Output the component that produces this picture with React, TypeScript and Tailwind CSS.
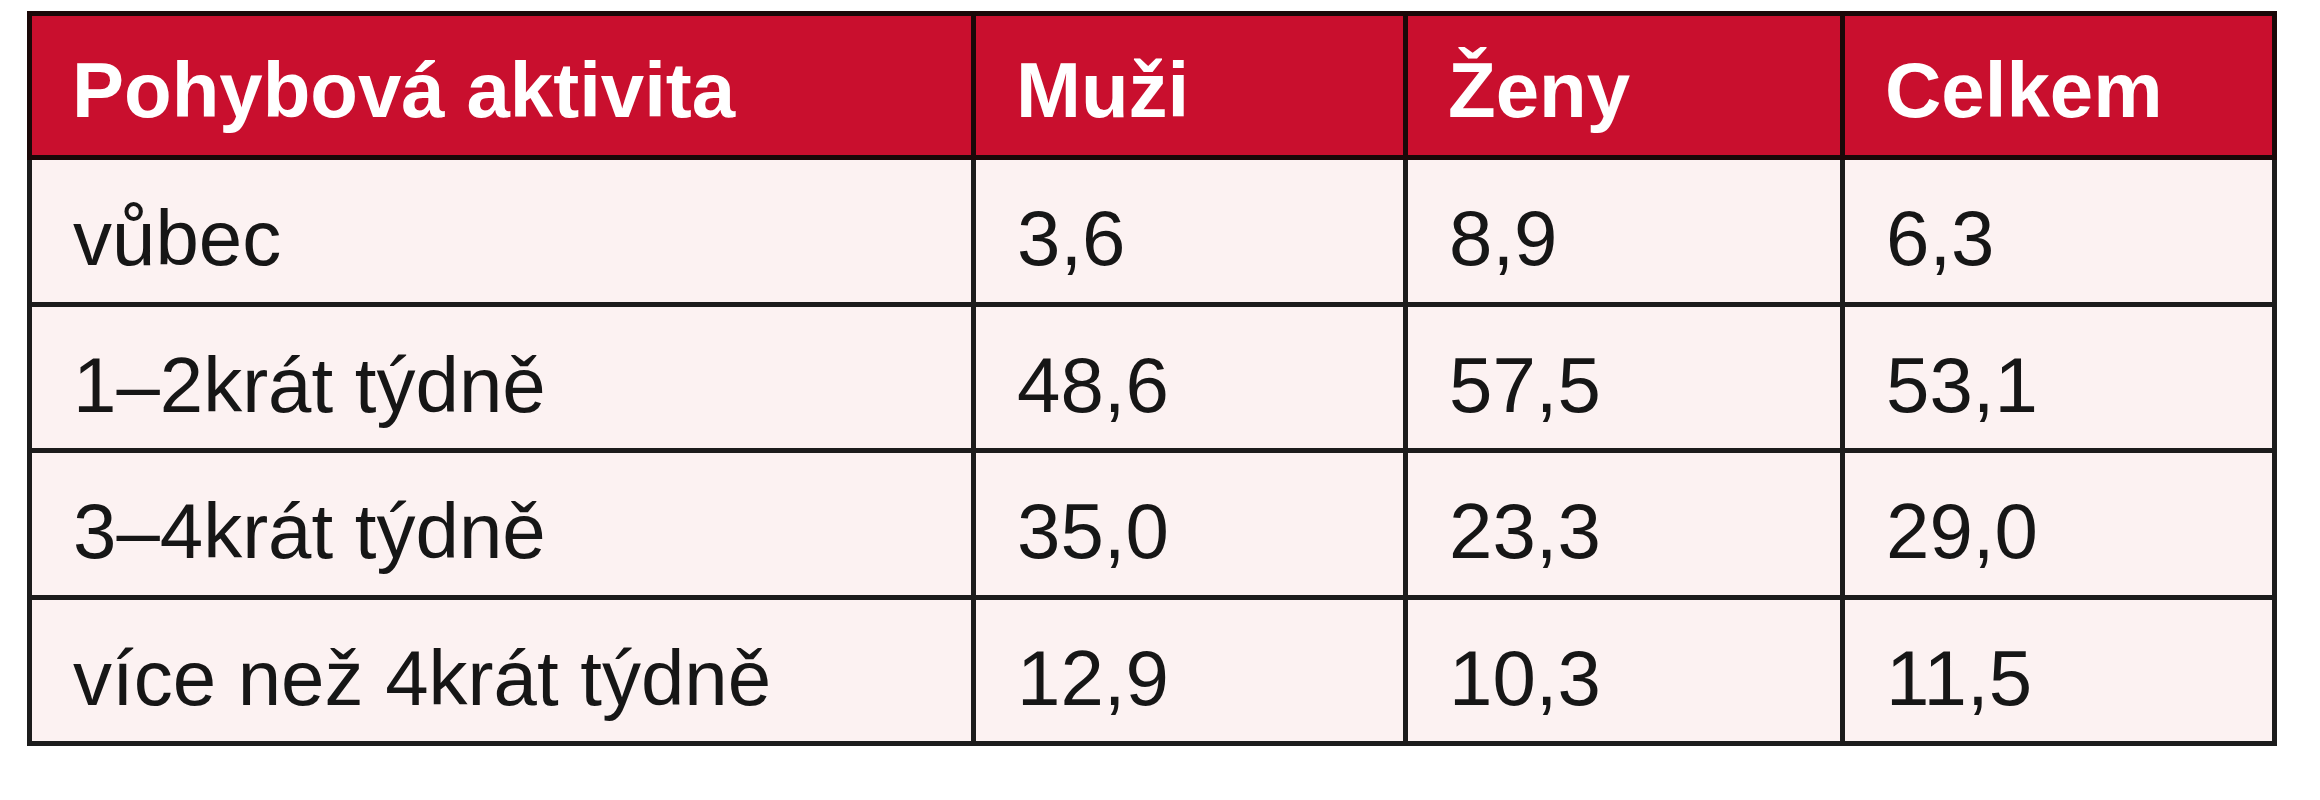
import React from 'react'

const rows = [
  { label: 'vůbec', men: '3,6', women: '8,9', total: '6,3' },
  { label: '1–2krát týdně', men: '48,6', women: '57,5', total: '53,1' },
  { label: '3–4krát týdně', men: '35,0', women: '23,3', total: '29,0' },
  { label: 'více než 4krát týdně', men: '12,9', women: '10,3', total: '11,5' },
]

const th = 'border-[5px] border-[#1a0808] align-top pl-[40px] pt-[35px] text-left font-bold text-white leading-none'
const td = 'border-[5px] border-[#1c1c1c] align-top pl-[41px] pt-[39px] text-left font-normal text-[#161616] leading-none'

export default function App() {
  return (
    <div className="min-h-[800px] bg-white pt-[11px] pl-[27px] font-['Liberation_Sans',Arial,sans-serif] text-[78px]">
      <table className="table-fixed border-collapse w-[2250px]">
        <colgroup>
          <col className="w-[944px]" />
          <col className="w-[432px]" />
          <col className="w-[437px]" />
          <col className="w-[432px]" />
        </colgroup>
        <thead>
          <tr className="h-[144px] bg-[#c90f2e]">
            <th className={th}>Pohybová aktivita</th>
            <th className={th}>Muži</th>
            <th className={th}>Ženy</th>
            <th className={th}>Celkem</th>
          </tr>
        </thead>
        <tbody>
          {rows.map((r) => (
            <tr key={r.label} className="h-[146.5px] bg-[#fcf2f2]">
              <td className={td}>{r.label}</td>
              <td className={td}>{r.men}</td>
              <td className={td}>{r.women}</td>
              <td className={td}>{r.total}</td>
            </tr>
          ))}
        </tbody>
      </table>
    </div>
  )
}
